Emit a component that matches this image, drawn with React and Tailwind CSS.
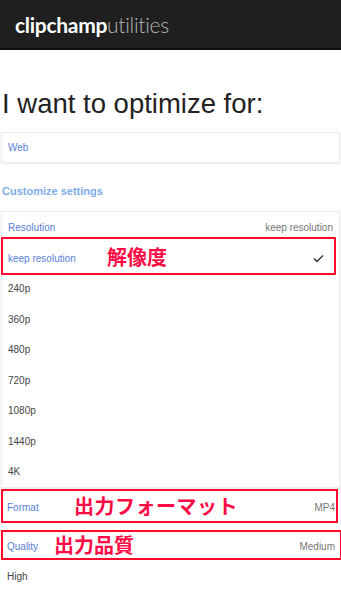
import React from "react";

const options = ["240p", "360p", "480p", "720p", "1080p", "1440p", "4K"];

export default function App() {
  return (
    <div className="relative w-[341px] h-[600px] overflow-hidden bg-white" style={{ fontFamily: "'Liberation Sans', Arial, 'Noto Sans CJK JP', sans-serif" }}>
      <header className="h-[50px] bg-[#1f1f1f] border-b-2 border-[#0f0f0f] flex items-center pl-[15px]">
        <span className="text-[21px] tracking-[-0.3px] leading-none" style={{ fontFamily: "Lato, sans-serif" }}>
          <span className="font-bold text-white">clipchamp</span>
          <span className="font-light text-[#b5b5b5]">utilities</span>
        </span>
      </header>

      <h1 className="mt-[37px] pl-[2px] text-[27.5px] leading-[34px] text-[#222] font-normal">I want to optimize for:</h1>

      <div className="mt-[11px] mx-[1px] h-[31px] border border-[#ececec] shadow-[0_1px_2px_rgba(0,0,0,0.08)] flex items-center px-[6px] text-[10px] text-[#5a80d8]">
        Web
      </div>

      <div className="mt-[20px] pl-[2px] h-[16px] flex items-center text-[11px] font-bold text-[#7eacea]">Customize settings</div>

      <div className="mt-[12px] mx-[1px] border border-[#ececec] shadow-[0_1px_2px_rgba(0,0,0,0.08)]">
        <div className="h-[31px] flex items-center justify-between px-[6px] text-[10px]">
          <span className="text-[#5a80d8]">Resolution</span>
          <span className="text-[#777]">keep resolution</span>
        </div>
        <div className="h-[30.5px] flex items-center justify-between px-[6px] text-[10px]">
          <span className="text-[#5a80d8]">keep resolution</span>
          <svg width="11" height="9" viewBox="0 0 11 9" className="mr-[9px]">
            <path d="M1 4.5 L4 7.5 L10 1.5" fill="none" stroke="#333" strokeWidth="1.4" />
          </svg>
        </div>
        {options.map((o) => (
          <div key={o} className="h-[30.5px] flex items-center px-[6px] text-[10px] text-[#444]">{o}</div>
        ))}
      </div>

      <div className="mt-[2px] h-[33px] flex items-center justify-between pl-[7px] pr-[6px] text-[10px] border-t border-[#e6e6e6]">
        <span className="text-[#5a80d8]">Format</span>
        <span className="text-[#777]">MP4</span>
      </div>
      <div className="mt-[8px] h-[30px] flex items-center justify-between pl-[7px] pr-[6px] text-[10px] border-t border-[#e6e6e6]">
        <span className="text-[#5a80d8]">Quality</span>
        <span className="text-[#777]">Medium</span>
      </div>
      <div className="h-[31px] flex items-center px-[7px] text-[10px] text-[#444]">High</div>

      {/* annotations */}
      <div className="absolute left-[1px] top-[237px] w-[335px] h-[38px] border-2 border-[#ff0a2a] pointer-events-none" />
      <div className="absolute left-[107px] top-[245px] text-[20px] leading-[24px] font-bold text-[#ff0a45]" style={{ fontFamily: "'Noto Sans CJK JP', sans-serif" }}>解像度</div>

      <div className="absolute left-[1px] top-[489px] w-[337px] h-[34px] border-2 border-[#ff0a2a] pointer-events-none" />
      <div className="absolute left-[74px] top-[494px] text-[20px] leading-[24px] font-bold text-[#ff0a45] tracking-[0.5px]" style={{ fontFamily: "'Noto Sans CJK JP', sans-serif" }}>出力フォーマット</div>

      <div className="absolute left-[1px] top-[530px] w-[341px] h-[30px] border-2 border-[#ff0a2a] pointer-events-none" />
      <div className="absolute left-[54px] top-[533px] text-[20px] leading-[24px] font-bold text-[#ff0a45]" style={{ fontFamily: "'Noto Sans CJK JP', sans-serif" }}>出力品質</div>
    </div>
  );
}
